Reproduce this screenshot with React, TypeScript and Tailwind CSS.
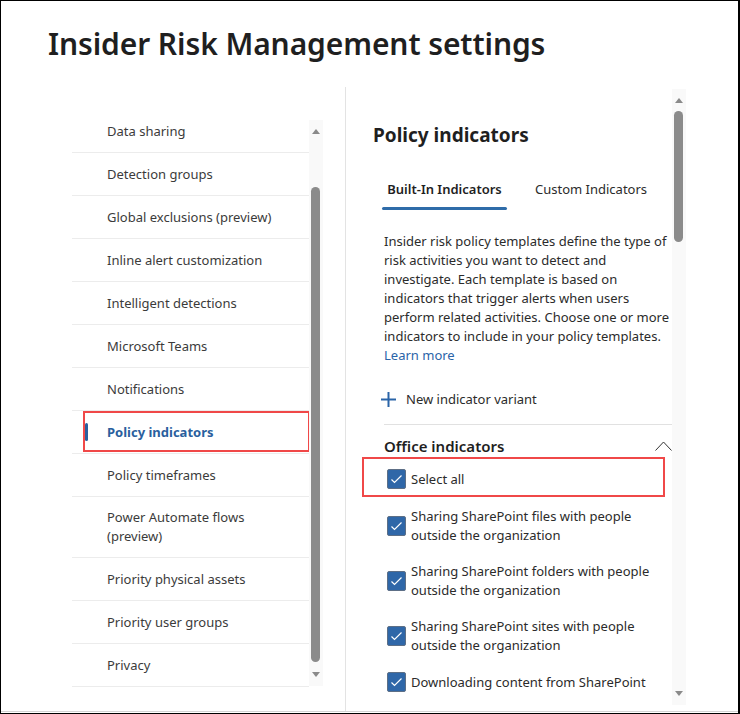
import React from "react";

const navItems: { label: React.ReactNode; tall?: boolean; active?: boolean }[] = [
  { label: "Data sharing" },
  { label: "Detection groups" },
  { label: "Global exclusions (preview)" },
  { label: "Inline alert customization" },
  { label: "Intelligent detections" },
  { label: "Microsoft Teams" },
  { label: "Notifications" },
  { label: "Policy indicators", active: true },
  { label: "Policy timeframes" },
  { label: <>Power Automate flows<br />(preview)</>, tall: true },
  { label: "Priority physical assets" },
  { label: "Priority user groups" },
  { label: "Privacy" },
];

const indicators: React.ReactNode[] = [
  <>Sharing SharePoint files with people<br />outside the organization</>,
  <>Sharing SharePoint folders with people<br />outside the organization</>,
  <>Sharing SharePoint sites with people<br />outside the organization</>,
  <>Downloading content from SharePoint</>,
];

function Checkbox() {
  return (
    <span className="flex h-[20px] w-[19px] shrink-0 items-center justify-center rounded-[2px] border border-[#5d6f86] bg-[#2f67a8]">
      <svg width="13" height="10" viewBox="0 0 13 10" fill="none">
        <path d="M1.5 5.5 L4.5 8.5 L11.5 1.5" stroke="white" strokeWidth="1.2" />
      </svg>
    </span>
  );
}

function Scrollbar({ thumbTop, thumbHeight, className }: { thumbTop: number; thumbHeight: number; className: string }) {
  return (
    <div className={"relative flex w-[14px] flex-col items-center bg-[#f9f9f9] " + className}>
      <svg className="mt-[9px]" width="8" height="5" viewBox="0 0 8 5">
        <path d="M0 5 L4 0 L8 5 Z" fill="#8a8a8a" />
      </svg>
      <div
        className="absolute left-[2px] w-[9px] rounded-full bg-[#8b8b8b]"
        style={{ top: thumbTop, height: thumbHeight }}
      />
      <svg className="mb-[9px] mt-auto" width="8" height="5" viewBox="0 0 8 5">
        <path d="M0 0 L4 5 L8 0 Z" fill="#8a8a8a" />
      </svg>
    </div>
  );
}

export default function App() {
  return (
    <div
      className="flex h-[714px] w-[740px] flex-col overflow-hidden border-l border-t border-r-2 border-b border-black bg-white text-[#2b2b2b]"
      style={{ fontFamily: '"Noto Sans", "Open Sans", sans-serif' }}
    >
      <div className="flex flex-1 flex-col border-b border-[#d4d4d4]">
        <h1 className="pl-[47px] pt-[24px] text-[30px] font-semibold leading-[38px] tracking-[-0.1px] text-[#1f1f1f]">
          Insider Risk Management settings
        </h1>

        <div className="mt-[24px] flex flex-1">
          {/* left nav */}
          <div className="flex w-[344px] pl-[71px] pt-[23px]">
            <ul className="w-[237px]">
              {navItems.map((item, i) => (
                <li
                  key={i}
                  className={
                    "relative flex items-center border-b border-[#ececec] pl-[35px] text-[13px] leading-[19px] " +
                    (item.tall ? "h-[61px] " : "h-[43px] ") +
                    (item.active ? "font-bold text-[#2a5f9e]" : "text-[#3b3b3b]")
                  }
                >
                  {item.active && (
                    <>
                      <span className="absolute left-[13px] top-[12px] h-[18px] w-[3px] rounded-full bg-[#2a5f9e]" />
                      <span className="absolute left-[11px] right-[-1px] top-[0px] h-[41px] border-2 border-[#f04848]" />
                    </>
                  )}
                  <span>{item.label}</span>
                </li>
              ))}
            </ul>
            <Scrollbar className="ml-[0px] mt-[10px] h-[566px]" thumbTop={67} thumbHeight={475} />
          </div>

          <div className="w-px bg-[#e3e3e3]" />

          {/* right panel */}
          <div className="flex flex-1">
            <div className="w-[326px]">
              <h2 className="pl-[27px] pt-[35px] text-[19px] font-bold leading-[26px] text-[#1f1f1f]">Policy indicators</h2>

              <div className="ml-[36px] mt-[32px] flex text-[13px]">
                <div className="flex w-[125px] flex-col items-center">
                  <span className="font-semibold leading-[19px] text-[#1f1f1f]">Built-In Indicators</span>
                  <span className="mt-[8px] h-[3px] w-full rounded-full bg-[#2f6ca9]" />
                </div>
                <span className="ml-[28px] leading-[19px] text-[#2b2b2b]">Custom Indicators</span>
              </div>

              <p className="ml-[38px] mt-[22px] text-[13px] leading-[19px] text-[#2b2b2b]">
                Insider risk policy templates define the type of<br />
                risk activities you want to detect and<br />
                investigate. Each template is based on<br />
                indicators that trigger alerts when users<br />
                perform related activities. Choose one or more<br />
                indicators to include in your policy templates.<br />
                <span className="text-[#2a64a8]">Learn more</span>
              </p>

              <div className="ml-[35px] mt-[25px] flex items-center gap-[10px] text-[13px] leading-[19px]">
                <svg width="15" height="15" viewBox="0 0 15 15">
                  <path d="M7.5 0 V15 M0 7.5 H15" stroke="#2a64a8" strokeWidth="2" />
                </svg>
                <span>New indicator variant</span>
              </div>

              <div className="ml-[38px] mt-[15px] h-px w-[288px] bg-[#e1e1e1]" />

              <div className="ml-[38px] mt-[11px] flex w-[288px] items-center justify-between">
                <span className="text-[15px] font-semibold leading-[20px] text-[#1f1f1f]">Office indicators</span>
                <svg width="17" height="10" viewBox="0 0 17 10" fill="none">
                  <path d="M0.5 9.5 L8.5 1 L16.5 9.5" stroke="#333" strokeWidth="1" />
                </svg>
              </div>

              <div className="ml-[16px] mt-[1px] flex h-[40px] w-[303px] items-center border-2 border-[#f04848] pl-[23px] pt-[4px]">
                <Checkbox />
                <span className="ml-[5px] text-[13px] leading-[19px]">Select all</span>
              </div>

              <div className="ml-[41px] mt-[10px] flex flex-col gap-[17px]">
                {indicators.map((t, i) => (
                  <div key={i} className="flex items-center gap-[5px]">
                    <Checkbox />
                    <span className="text-[13px] leading-[19px]">{t}</span>
                  </div>
                ))}
              </div>
            </div>
            <Scrollbar className="mt-[2px] h-[616px]" thumbTop={22} thumbHeight={131} />
          </div>
        </div>
      </div>
      <div className="h-[1px]" />
    </div>
  );
}
